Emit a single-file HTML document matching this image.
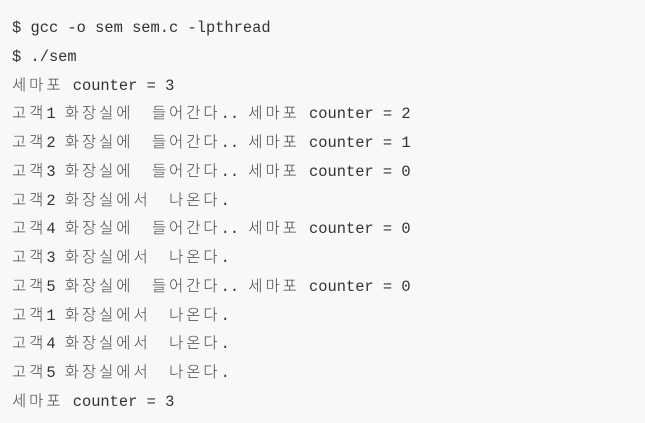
<!DOCTYPE html>
<html><head><meta charset="utf-8"><style>
html,body{margin:0;padding:0;background:#f8f8f8;width:645px;height:423px;overflow:hidden}
.w{padding:14px 0 0 12px;font-family:"Liberation Mono","Noto Sans CJK KR",monospace;font-size:15.4px;color:#333}
.w div{height:28.77px;line-height:28.77px;white-space:pre;overflow:hidden}
.k{font-family:"Noto Sans CJK KR","NanumGothic",sans-serif;letter-spacing:3px;color:#444;font-weight:300;line-height:1;vertical-align:baseline}
</style></head><body><div class="w">
<div>$ gcc -o sem sem.c -lpthread</div>
<div>$ ./sem</div>
<div><span class="k">세마포</span> counter = 3</div>
<div><span class="k">고객</span>1 <span class="k">화장실에</span>  <span class="k">들어간다</span>.. <span class="k">세마포</span> counter = 2</div>
<div><span class="k">고객</span>2 <span class="k">화장실에</span>  <span class="k">들어간다</span>.. <span class="k">세마포</span> counter = 1</div>
<div><span class="k">고객</span>3 <span class="k">화장실에</span>  <span class="k">들어간다</span>.. <span class="k">세마포</span> counter = 0</div>
<div><span class="k">고객</span>2 <span class="k">화장실에서</span>  <span class="k">나온다</span>.</div>
<div><span class="k">고객</span>4 <span class="k">화장실에</span>  <span class="k">들어간다</span>.. <span class="k">세마포</span> counter = 0</div>
<div><span class="k">고객</span>3 <span class="k">화장실에서</span>  <span class="k">나온다</span>.</div>
<div><span class="k">고객</span>5 <span class="k">화장실에</span>  <span class="k">들어간다</span>.. <span class="k">세마포</span> counter = 0</div>
<div><span class="k">고객</span>1 <span class="k">화장실에서</span>  <span class="k">나온다</span>.</div>
<div><span class="k">고객</span>4 <span class="k">화장실에서</span>  <span class="k">나온다</span>.</div>
<div><span class="k">고객</span>5 <span class="k">화장실에서</span>  <span class="k">나온다</span>.</div>
<div><span class="k">세마포</span> counter = 3</div>
</div></body></html>
